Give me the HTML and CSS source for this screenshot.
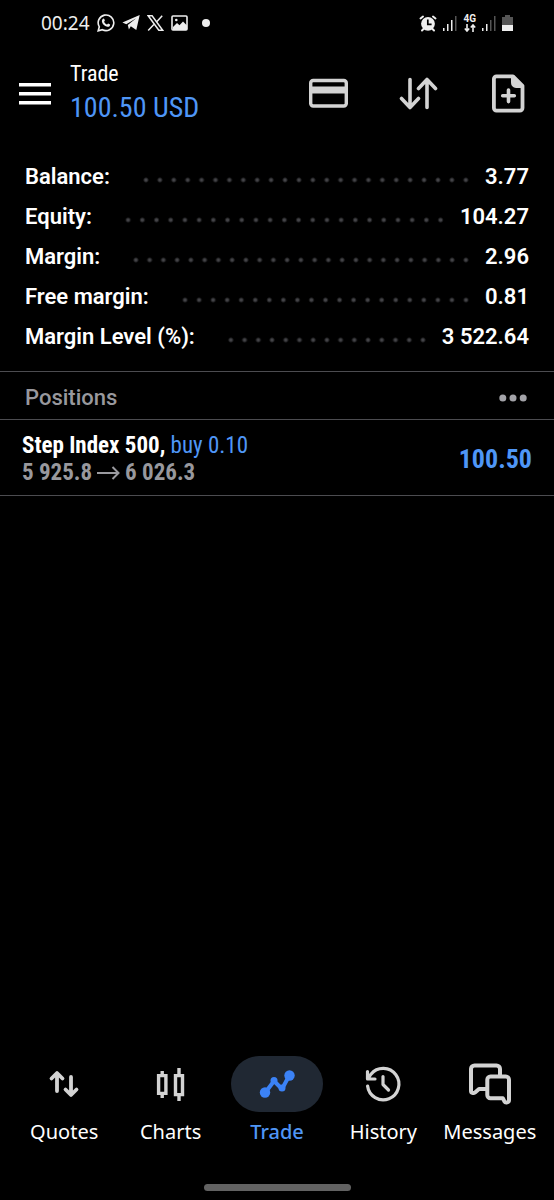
FILE: index.html
```html
<!DOCTYPE html>
<html lang="en">
<head>
<meta charset="utf-8">
<meta name="viewport" content="width=device-width, initial-scale=1">
<title>Trade</title>
<link rel="stylesheet" href="styles.css">
</head>
<body>
<div class="app">
  <div class="status">
    <div class="status-left">
      <span class="clock">00:24</span>
      <svg width="18" height="18" viewBox="0 0 18 18" fill="none" stroke="#eee" stroke-width="1.6"><path d="M1.2 16.8l1.1-4A7.8 7.8 0 1 1 5.400 15.700z"/><path d="M5.500 5.200c.8-1.200 1.500-.9 1.900.1l.5 1.200-.8 1.200c.6 1.400 1.700 2.400 3 2.900l1-1 2 .9c.1 2-1.500 2.600-2.900 2.200-2.900-.8-5-3.100-5.300-5.300 0-.8.1-1.600.6-2.200z" fill="#eee" stroke="none"/></svg>
      <svg width="18" height="16" viewBox="0 0 18 16" fill="#eee"><path d="M.4 7.600L17.700 0 14.300 15 8.800 11.300 6.900 14.500 5.800 10 14.200 3.200 4.300 9.200z"/></svg>
      <svg width="17" height="16" viewBox="0 0 17 16" fill="none" stroke="#eee" stroke-width="1.500"><path d="M1.200.8h3.900l10.600 14.400h-3.900zM15.200.7L9.300 7.200M7.300 9.100L1.200 15.400"/></svg>
      <svg width="17" height="16" viewBox="0 0 17 16"><rect x="1" y="1" width="15" height="14" rx="1" fill="none" stroke="#eee" stroke-width="1.600"/><path d="M2 12l4-4 2.500 2.200L12 6.500l4 4V15H2z" fill="#eee"/><circle cx="5.300" cy="5" r="1.300" fill="#eee"/></svg>
      <span class="dot"></span>
    </div>
    <div class="status-right">
      <svg width="18" height="17" viewBox="0 0 18 17"><g stroke="#eee" stroke-width="2" stroke-linecap="round"><path d="M1.500 3.500L4 1.500M16.500 3.500L14 1.500M3 15.500l2-2M15 15.500l-2-2"/></g><circle cx="9" cy="8.800" r="6.900" fill="#eee"/><path d="M8.800 4.500v4.800h3.800" fill="none" stroke="#000" stroke-width="1.700"/></svg>
      <svg width="14" height="16" viewBox="0 0 14 16"><path fill="#eee" d="M0 13h1.500v3H0zM4 9h1.500v7H4zM8 5h1.500v11H8z"/><path fill="#555" d="M12 1h1.500v15H12z"/></svg>
      <span class="network">4G<svg width="12" height="8" viewBox="0 0 12 8" fill="none" stroke="#eee" stroke-width="1.600"><path d="M3 0v7M.8 4.500L3 7l2.200-2.500M9 8V1M6.800 3.500L9 1l2.200 2.500"/></svg></span>
      <svg width="14" height="16" viewBox="0 0 14 16"><path fill="#eee" d="M0 13h1.500v3H0zM4 9h1.500v7H4z"/><path fill="#555" d="M8 5h1.500v11H8zM12 1h1.500v15H12z"/></svg>
      <svg width="11" height="16" viewBox="0 0 11 16"><path fill="#555" d="M3 0h5v2h3v8H0V2h3z"/><path fill="#eee" d="M0 10h11v6H0z"/></svg>
    </div>
  </div>

  <header class="topbar">
    <button class="icon-btn" aria-label="Menu"><svg width="32" height="22" viewBox="0 0 32 22" fill="#fff"><path d="M0 0h32v3.500H0zM0 9h32v3.500H0zM0 18h32v3.500H0z"/></svg></button>
    <div class="heading">
      <h1 class="title">Trade</h1>
      <div class="profit">100.50 USD</div>
    </div>
    <div class="actions">
      <button class="icon-btn" aria-label="Funds"><svg width="40" height="40" viewBox="0 0 40 40"><rect x="1.700" y="6.500" width="35.600" height="25.500" rx="2.500" fill="none" stroke="#d3d3d3" stroke-width="3.400"/><path d="M2 12.500h35v7H2z" fill="#d3d3d3"/></svg></button>
      <button class="icon-btn" aria-label="Sort"><svg width="40" height="40" viewBox="0 0 40 40" fill="none" stroke="#d3d3d3" stroke-width="3.600" stroke-linecap="round" stroke-linejoin="round"><path d="M11 5.500v28M2.500 24.500l8.500 9 8.500-9M28 33.500v-28M19.500 14.500L28 5.500l8.500 9"/></svg></button>
      <button class="icon-btn" aria-label="New order"><svg width="40" height="40" viewBox="0 0 40 40"><path d="M7.500 2.400h16.500l9.500 9.500V34a2.600 2.600 0 0 1-2.600 2.600H7.500A2.600 2.600 0 0 1 4.900 34V5a2.600 2.600 0 0 1 2.600-2.600z" fill="none" stroke="#d3d3d3" stroke-width="3.800" stroke-linejoin="round"/><path d="M22 1.500h3l10 10.500V14H29c-5 0-7-2-7-6z" fill="#d3d3d3"/><path d="M19.500 16v11.600M13.700 21.800h11.600" stroke="#d3d3d3" stroke-width="3.600" stroke-linecap="round"/></svg></button>
    </div>
  </header>

  <main class="main">
    <dl class="account">
      <div class="row"><dt>Balance:</dt><dd>3.77</dd></div>
      <div class="row"><dt>Equity:</dt><dd>104.27</dd></div>
      <div class="row"><dt>Margin:</dt><dd>2.96</dd></div>
      <div class="row"><dt>Free margin:</dt><dd>0.81</dd></div>
      <div class="row"><dt>Margin Level (%):</dt><dd>3 522.64</dd></div>
    </dl>
    <section>
      <div class="section-head">
        <h2 class="section-title">Positions</h2>
        <button class="icon-btn" aria-label="More"><svg width="28" height="8" viewBox="0 0 28 8" fill="#a3a3a8"><circle cx="3.800" cy="4" r="3.500"/><circle cx="14" cy="4" r="3.500"/><circle cx="24.200" cy="4" r="3.500"/></svg></button>
      </div>
      <div class="position">
        <div>
          <div class="symbol"><b>Step Index 500,</b> <span class="side">buy 0.10</span></div>
          <div class="prices">5 925.8 <svg width="23" height="14" viewBox="0 0 23 14" fill="none" stroke="#9a9a9f" stroke-width="2"><path d="M0 7h21.500M15.500 1l6 6-6 6"/></svg> 6 026.3</div>
        </div>
        <div class="result">100.50</div>
      </div>
    </section>
  </main>

  <nav class="tabs">
    <a class="tab" href="#quotes"><span class="tab-icon"><svg width="44" height="44" viewBox="0 0 44 44" fill="none" stroke="#d3d3d3" stroke-width="3.800" stroke-linecap="round" stroke-linejoin="round"><path d="M15 29V11.500M9.500 16.500L15 11l5.500 5.500M29 15v17.500M23.500 27.500L29 33l5.500-5.500"/></svg></span>Quotes</a>
    <a class="tab" href="#charts"><span class="tab-icon"><svg width="44" height="44" viewBox="0 0 44 44" fill="none" stroke="#d3d3d3" stroke-width="3.400"><path d="M9.600 13.600h7.300v17.800H9.600zM13.200 9v4M13.200 32v4M26.500 13.600h7v19h-7zM30 6v7M30 33v6"/></svg></span>Charts</a>
    <a class="tab active" href="#trade" aria-current="page"><span class="tab-icon"><svg width="44" height="44" viewBox="0 0 44 44" fill="#3b82f6" stroke="#3b82f6" stroke-width="4" stroke-linejoin="round"><path d="M10 31l9-12 8 8 7-13" fill="none"/><g stroke="none"><circle cx="10" cy="30.500" r="5.200"/><circle cx="19" cy="18.500" r="3.500"/><circle cx="27" cy="26" r="3.500"/><circle cx="34.500" cy="13.500" r="5.200"/></g></svg></span>Trade</a>
    <a class="tab" href="#history"><span class="tab-icon"><svg width="44" height="44" viewBox="0 0 44 44" fill="none" stroke="#d3d3d3" stroke-width="3.200" stroke-linecap="round" stroke-linejoin="round"><path d="M6.600 24A15.700 15.700 0 1 0 10 12.200l-3 4.300M6.500 9.500v7.500h7.500M22 14.500v8l5.500 5.500"/></svg></span>History</a>
    <a class="tab" href="#messages"><span class="tab-icon"><svg width="44" height="44" viewBox="0 0 44 44" fill="none" stroke="#d3d3d3" stroke-width="4" stroke-linejoin="round"><path d="M18 27h-7l-4 3.500c-1.500 1.200-4 .5-4-1.500V7a3.500 3.500 0 0 1 3.500-3.500h22A3.500 3.500 0 0 1 32 7v7"/><path d="M22.500 14.500h15.300A3.200 3.200 0 0 1 41 17.700V38c0 2.500-3.500 3.300-4.700 1.200l-1.500-3H22.500a3.200 3.200 0 0 1-3.200-3.200V17.700a3.200 3.200 0 0 1 3.200-3.200z"/></svg></span>Messages</a>
  </nav>
  <div class="home-bar"></div>
</div>
</body>
</html>
```
FILE: styles.css
```css
* { box-sizing: border-box; }
body { margin: 0; background: #000; color: #fff; font-family: Roboto, "Liberation Sans", sans-serif; }
svg { display: block; flex: none; }
h1, h2, dl, dd { margin: 0; font-weight: inherit; }
.app { display: flex; flex-direction: column; min-height: 100vh; }
.status { display: flex; justify-content: space-between; align-items: center; height: 46px; padding: 0 41px; }
.status-left { display: flex; align-items: center; gap: 7px; }
.status-right { display: flex; align-items: center; gap: 6px; }
.clock { font-family: "Noto Sans", sans-serif; font-size: 19px; line-height: 24px; color: #eee; }
.dot { width: 8px; height: 8px; margin-left: 7px; border-radius: 50%; background: #eee; }
.network { display: flex; flex-direction: column; align-items: center; gap: 1px; font-size: 10px; line-height: 8px; font-weight: 700; color: #eee; }
.icon-btn { display: block; padding: 0; border: 0; background: none; cursor: pointer; }
.topbar { display: flex; align-items: center; gap: 19px; padding: 14px 25px 0 19px; }
.heading { flex: 1; font-family: "Roboto Condensed", "Liberation Sans Narrow", Roboto, sans-serif; }
.title { font-size: 22px; line-height: 28px; }
.profit { font-size: 28px; line-height: 40px; color: #4f96f6; }
.actions { display: flex; gap: 50px; }
.account { padding: 29px 25px 14px; }
.row { display: flex; align-items: center; height: 40px; font-size: 22px; line-height: 28px; font-weight: 600; }
.row dt { order: 1; }
.row dd { order: 3; }
.row::after { content: ""; order: 2; flex: 1; height: 14px; margin: 5px 12px 0 29px; background: radial-gradient(circle, #444448 1px, transparent 3px) 0 50% / 14px 14px round no-repeat; }
.section-head { display: flex; align-items: center; justify-content: space-between; height: 48px; padding: 4px 27px 0 25px; border-top: 1px solid #4c4c50; }
.section-title { font-size: 22px; line-height: 28px; font-weight: 500; color: #98989d; }
.position { display: flex; align-items: center; justify-content: space-between; padding: 12px 22px 9px; border-top: 1px solid #4c4c50; border-bottom: 1px solid #4c4c50; font-family: "Roboto Condensed", "Liberation Sans Narrow", Roboto, sans-serif; font-size: 23px; line-height: 27px; }
.side { color: #4f96f6; }
.prices { display: flex; align-items: center; gap: 5px; font-weight: 700; color: #98989d; }
.result { font-size: 26px; line-height: 32px; font-weight: 700; color: #4f96f6; }
.tabs { display: grid; grid-template-columns: repeat(5, 1fr); margin-top: auto; padding: 0 11px; }
.tab { display: flex; flex-direction: column; align-items: center; gap: 6px; color: #fff; text-decoration: none; font-family: "Noto Sans", sans-serif; font-size: 20px; line-height: 28px; }
.tab-icon { display: grid; place-items: center; width: 92px; height: 56px; border-radius: 28px; }
.active { color: #4f96f6; font-weight: 500; }
.active .tab-icon { background: #202833; }
.home-bar { width: 147px; height: 7px; margin: 38px auto 9px; border-radius: 4px; background: #626262; }
```
